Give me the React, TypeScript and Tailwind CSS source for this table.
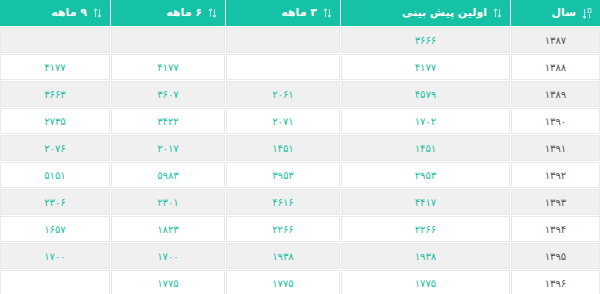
import React from 'react';

type Row = { year: string; first: string; m3: string; m6: string; m9: string };

const rows: Row[] = [
    { year: '۱۳۸۷', first: '۳۶۶۶', m3: '', m6: '', m9: '' },
    { year: '۱۳۸۸', first: '۴۱۷۷', m3: '', m6: '۴۱۷۷', m9: '۴۱۷۷' },
    { year: '۱۳۸۹', first: '۴۵۷۹', m3: '۲۰۶۱', m6: '۳۶۰۷', m9: '۳۶۶۳' },
    { year: '۱۳۹۰', first: '۱۷۰۲', m3: '۲۰۷۱', m6: '۳۴۲۲', m9: '۲۷۳۵' },
    { year: '۱۳۹۱', first: '۱۴۵۱', m3: '۱۴۵۱', m6: '۲۰۱۷', m9: '۲۰۷۶' },
    { year: '۱۳۹۲', first: '۲۹۵۳', m3: '۳۹۵۳', m6: '۵۹۸۳', m9: '۵۱۵۱' },
    { year: '۱۳۹۳', first: '۴۴۱۷', m3: '۴۶۱۶', m6: '۲۳۰۱', m9: '۲۳۰۶' },
    { year: '۱۳۹۴', first: '۲۲۶۶', m3: '۲۲۶۶', m6: '۱۸۲۳', m9: '۱۶۵۷' },
    { year: '۱۳۹۵', first: '۱۹۳۸', m3: '۱۹۳۸', m6: '۱۷۰۰', m9: '۱۷۰۰' },
    { year: '۱۳۹۶', first: '۱۷۷۵', m3: '۱۷۷۵', m6: '۱۷۷۵', m9: '' },
];

const SortIcon: React.FC = () => (
    <svg width="9" height="10" viewBox="0 0 9 10" className="shrink-0 opacity-70">
        <path d="M2.5 9V1M1 2.5L2.5 1L4 2.5" stroke="white" strokeWidth="1.1" fill="none" />
        <path d="M6.5 1v8M5 7.5L6.5 9L8 7.5" stroke="white" strokeWidth="1.1" fill="none" />
    </svg>
);

const SortNumIcon: React.FC = () => (
    <svg width="10" height="11" viewBox="0 0 10 11" className="shrink-0 opacity-80">
        <path d="M2.5 1v9M1 8.5L2.5 10L4 8.5" stroke="white" strokeWidth="1.1" fill="none" />
        <rect x="6" y="0.8" width="3" height="3.6" stroke="white" strokeWidth="0.9" fill="none" />
        <path d="M7.5 6.2v4" stroke="white" strokeWidth="1.1" />
    </svg>
);

const headers = [
    { label: 'سال', w: 'w-[89px]', icon: <SortNumIcon /> },
    { label: 'اولین پیش بینی', w: 'w-[169px]', icon: <SortIcon /> },
    { label: '۳ ماهه', w: 'w-[114px]', icon: <SortIcon /> },
    { label: '۶ ماهه', w: 'w-[114px]', icon: <SortIcon /> },
    { label: '۹ ماهه', w: 'w-[110px]', icon: <SortIcon /> },
];

const App: React.FC = () => {
    return (
        <div dir="rtl" className="w-[600px] h-[294px] overflow-hidden bg-white" style={{ fontFamily: '"DejaVu Sans", "Noto Sans", sans-serif' }}>
            <table className="w-[602px] table-fixed border-separate border-spacing-[1px] -mr-px -mt-px">
                <thead>
                    <tr>
                        {headers.map(h => (
                            <th key={h.label} className={`${h.w} h-[26px] bg-[#15c2a5] px-2 text-right text-[11px] font-bold text-white`}>
                                <div className="flex items-center gap-1.5">
                                    {h.icon}
                                    <span>{h.label}</span>
                                </div>
                            </th>
                        ))}
                    </tr>
                </thead>
                <tbody>
                    {rows.map((r, i) => {
                        const bg = i % 2 === 0 ? 'bg-[#f0f0f0]' : 'bg-white';
                        const cell = `${bg} h-[26px] border border-[#e9e9e9] text-center text-[10px]`;
                        return (
                            <tr key={r.year}>
                                <td className={`${cell} text-[#555555]`}>{r.year}</td>
                                <td className={`${cell} text-[#22bfa3]`}>{r.first}</td>
                                <td className={`${cell} text-[#22bfa3]`}>{r.m3}</td>
                                <td className={`${cell} text-[#22bfa3]`}>{r.m6}</td>
                                <td className={`${cell} text-[#22bfa3]`}>{r.m9}</td>
                            </tr>
                        );
                    })}
                </tbody>
            </table>
        </div>
    );
};

export default App;
